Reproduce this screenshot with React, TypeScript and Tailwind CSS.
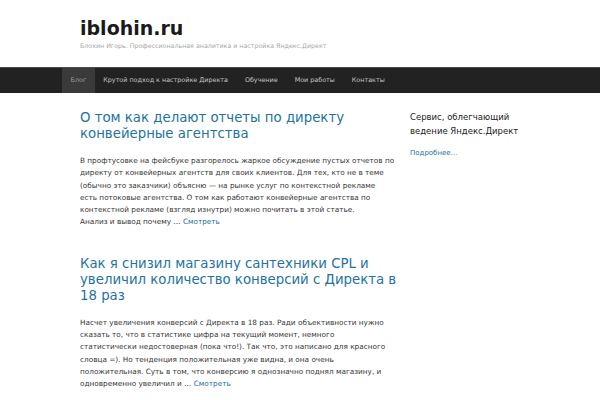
import React from "react";

const nav = ["Блог", "Крутой подход к настройке Директа", "Обучение", "Мои работы", "Контакты"];

const posts = [
  {
    title: ["О том как делают отчеты по директу", "конвейерные агентства"],
    body: [
      "В профтусовке на фейсбуке разгорелось жаркое обсуждение пустых отчетов по",
      "директу от конвейерных агентств для своих клиентов. Для тех, кто не в теме",
      "(обычно это заказчики) объясню — на рынке услуг по контекстной рекламе",
      "есть потоковые агентства. О том как работают конвейерные агентства по",
      "контекстной рекламе (взгляд изнутри) можно почитать в этой статье.",
      "Анализ и вывод почему …",
    ],
  },
  {
    title: ["Как я снизил магазину сантехники CPL и", "увеличил количество конверсий с Директа в", "18 раз"],
    body: [
      "Насчет увеличения конверсий с Директа в 18 раз. Ради объективности нужно",
      "сказать то, что в статистике цифра на текущий момент, немного",
      "статистически недостоверная (пока что!). Так что, это написано для красного",
      "словца =). Но тенденция положительная уже видна, и она очень",
      "положительная. Суть в том, что конверсию я однозначно поднял магазину, и",
      "одновременно увеличил и …",
    ],
  },
];

export default function App() {
  return (
    <div
      className="w-[600px] h-[400px] overflow-hidden bg-white"
      style={{ fontFamily: '"DejaVu Sans", sans-serif' }}
    >
      <header className="mx-[62px] px-[18px] pt-[17px]">
        <div className="text-[19px] leading-[22px] font-bold text-[#1a1a1a]">iblohin.ru</div>
        <div className="mt-[2px] text-[6.3px] leading-[9px] text-[#a8a8a8]">
          Блохин Игорь. Профессиональная аналитика и настройка Яндекс.Директ
        </div>
      </header>
      <nav className="mt-[17px] h-[26px] bg-[#222222] border-t border-[#4a4a4a]">
        <ul className="mx-[62px] flex h-full">
          {nav.map((n, i) => (
            <li
              key={n}
              className={
                "flex items-center px-[8.5px] text-[6.4px] whitespace-nowrap " +
                (i === 0 ? "bg-[#3a3a3a] text-[#9a9a9a]" : "text-[#c4c4c4]")
              }
            >
              {n}
            </li>
          ))}
        </ul>
      </nav>
      <div className="mx-[62px] px-[18px] pt-[17px] flex gap-[15px]">
        <main className="w-[315px] flex flex-col gap-[27px]">
          {posts.map((p, i) => (
            <article key={i}>
              <h2 className="text-[13.3px] leading-[16px] text-[#25729f] whitespace-nowrap">
                {p.title.map((t) => (
                  <div key={t}>{t}</div>
                ))}
              </h2>
              <div className="mt-[13px] text-[7.3px] leading-[12.3px] text-[#383838] whitespace-nowrap">
                {p.body.map((b, j) => (
                  <div key={j}>
                    {b}
                    {j === p.body.length - 1 && (
                      <span className="text-[#25729f]"> Смотреть</span>
                    )}
                  </div>
                ))}
              </div>
            </article>
          ))}
        </main>
        <aside className="w-[110px]">
          <div className="text-[8.5px] leading-[14px] text-[#222] whitespace-nowrap">
            <div>Сервис, облегчающий</div>
            <div>ведение Яндекс.Директ</div>
          </div>
          <div className="mt-[10px] text-[7px] leading-[10px] text-[#25729f]">Подробнее…</div>
        </aside>
      </div>
    </div>
  );
}
